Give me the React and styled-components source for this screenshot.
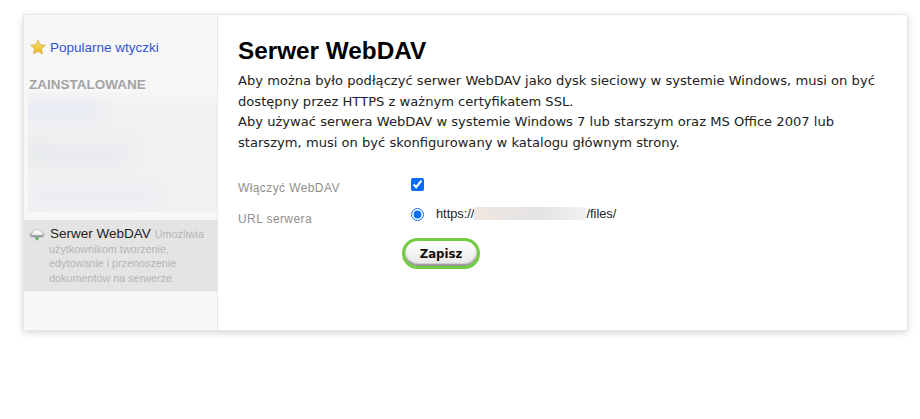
import React from "react";
import styled, { createGlobalStyle } from "styled-components";

const GlobalStyle = createGlobalStyle`
  html, body {
    margin: 0;
    background: #fff;
  }
  body {
    font-family: "Liberation Sans", Arial, sans-serif;
  }
`;

const Page = styled.div`
  box-sizing: border-box;
  min-height: 419px;
  padding: 15px 13px 0 24px;
`;

const Panel = styled.div`
  display: flex;
  height: 315px;
  background: #fff;
  box-shadow: 0 0 0 1px #e6e6e6, 0 2px 8px rgba(0, 0, 0, 0.2);
`;

const Sidebar = styled.aside`
  width: 194px;
  flex-shrink: 0;
  box-sizing: border-box;
  padding-top: 23px;
  background: #f7f7f7;
  border-right: 1px solid #e8e8e8;
  overflow: hidden;
`;

const PopularLink = styled.a`
  display: flex;
  align-items: center;
  gap: 4px;
  height: 18px;
  padding-left: 6px;
  color: #2f55d4;
  font-size: 13.5px;
  text-decoration: none;
`;

const SectionTitle = styled.div`
  margin: 21px 0 0 5px;
  height: 15px;
  line-height: 15px;
  color: #a3a3a3;
  font-size: 13.5px;
  font-weight: bold;
`;

const BlurArea = styled.div`
  position: relative;
  height: 120px;
  margin: 0 0 8px 4px;
  overflow: hidden;
  background: linear-gradient(#f6f6f6, #f1f1f1 14px);
`;

const BlurPatch = styled.div`
  position: absolute;
  left: ${(p) => p.$left}px;
  top: ${(p) => p.$top}px;
  width: ${(p) => p.$width}px;
  height: ${(p) => p.$height}px;
  background: ${(p) => p.$color};
  filter: blur(8px);
`;

const PluginItem = styled.div`
  box-sizing: border-box;
  width: 193px;
  height: 71px;
  padding: 7px 6px 0 25px;
  position: relative;
  background: #e4e4e4;
  color: #b5b5b5;
  font-size: 10.8px;
  line-height: 14.5px;
  text-indent: 1px;
`;

const PluginIcon = styled.svg`
  position: absolute;
  left: 5px;
  top: 8px;
`;

const PluginName = styled.span`
  color: #222;
  font-size: 13.5px;
  margin-right: 4px;
`;

const Main = styled.main`
  flex: 1;
  padding: 21px 20px 0 20px;
  min-width: 0;
`;

const Heading = styled.h1`
  margin: 0 0 5px;
  color: #000;
  font-size: 24.3px;
  line-height: 30px;
  font-weight: bold;
`;

const Intro = styled.p`
  margin: 0;
  width: 650px;
  color: #222;
  font-family: "DejaVu Sans", sans-serif;
  font-size: 13.1px;
  line-height: 20.5px;
`;

const Form = styled.div`
  display: grid;
  grid-template-columns: 173px 1fr;
  grid-auto-rows: 18px;
  row-gap: 12px;
  margin-top: 22px;
`;

const Label = styled.div`
  color: #8f8f8f;
  font-size: 12px;
  letter-spacing: 0.4px;
  line-height: 18px;
  padding-top: ${(p) => p.$pad}px;
`;

const Field = styled.div`
  display: flex;
  align-items: center;
  height: 18px;
  color: #222;
  font-size: 12.8px;
`;

const Check = styled.input`
  width: 13px;
  height: 13px;
  margin: 0;
  accent-color: #0a6cff;
`;

const Radio = styled(Check)`
  margin-right: 12px;
`;

const UrlText = styled.span`
  position: relative;
  top: -1px;
  display: flex;
  align-items: center;
`;

const Masked = styled.span`
  display: inline-block;
  width: 112px;
  height: 13px;
  background: linear-gradient(90deg, #efe6e0, #e4e4e4 60%, #f2f2f2);
`;

const SaveButton = styled.button`
  display: block;
  width: 78px;
  height: 31px;
  margin: 15px 0 0 164px;
  padding: 0;
  border: 3px solid #72cc42;
  border-radius: 16px;
  background: linear-gradient(#fff, #e6e6e6);
  box-shadow: inset 0 -2px 2px #8c8c8c;
  color: #111;
  font-family: "DejaVu Sans", sans-serif;
  font-size: 11.7px;
  font-weight: bold;
`;

const App = () => {
  return (
    <Page>
      <GlobalStyle />
      <Panel>
        <Sidebar>
          <PopularLink href="#">
            <svg width="16" height="16" viewBox="0 0 16 16">
              <defs>
                <linearGradient id="star" x1="0" y1="0" x2="0" y2="1">
                  <stop offset="0" stopColor="#f8e27a" />
                  <stop offset="1" stopColor="#e5b416" />
                </linearGradient>
              </defs>
              <path
                d="M8 .8l2.2 4.8 5.2.6-3.9 3.5 1.1 5.2L8 12.3l-4.6 2.6 1.1-5.2L.6 6.2l5.2-.6z"
                fill="url(#star)"
                stroke="#c9a94a"
                strokeWidth="0.6"
              />
            </svg>
            Popularne wtyczki
          </PopularLink>
          <SectionTitle>ZAINSTALOWANE</SectionTitle>
          <BlurArea>
            <BlurPatch $left={-5} $top={8} $width={75} $height={20} $color="#e8ebf5" />
            <BlurPatch $left={0} $top={52} $width={100} $height={18} $color="#e7e9f0" />
            <BlurPatch $left={-4} $top={62} $width={14} $height={10} $color="#e3eae0" />
            <BlurPatch $left={0} $top={98} $width={125} $height={16} $color="#eaecf6" />
          </BlurArea>
          <PluginItem>
            <PluginIcon width="16" height="14" viewBox="0 0 16 14">
              <ellipse cx="8" cy="6.5" rx="7.5" ry="3" fill="#aeb4b8" />
              <path
                d="M2.5 7a2 2 0 0 1 1.5-2.6A4 4 0 0 1 11.6 3.6 2.2 2.2 0 0 1 13.5 7z"
                fill="#f6f6f6"
                stroke="#a0a5a8"
                strokeWidth="0.5"
              />
              <path d="M1.5 8.3h13v0.9h-13z" fill="#7f858a" />
              <path d="M8 9l2 2H5.9z" fill="#3fa63a" />
              <path d="M7.2 10.8h1.6v1.4H7.2z" fill="#3fa63a" />
            </PluginIcon>
            <PluginName>Serwer WebDAV</PluginName>
            Umożliwia użytkownikom tworzenie, edytowanie i przenoszenie dokumentów na serwerze
          </PluginItem>
        </Sidebar>
        <Main>
          <Heading>Serwer WebDAV</Heading>
          <Intro>
            Aby można było podłączyć serwer WebDAV jako dysk sieciowy w systemie Windows, musi on być
            dostępny przez HTTPS z ważnym certyfikatem SSL.
            <br />
            Aby używać serwera WebDAV w systemie Windows 7 lub starszym oraz MS Office 2007 lub
            starszym, musi on być skonfigurowany w katalogu głównym strony.
          </Intro>
          <Form>
            <Label $pad={4}>Włączyć WebDAV</Label>
            <Field>
              <Check type="checkbox" defaultChecked />
            </Field>
            <Label $pad={5}>URL serwera</Label>
            <Field>
              <Radio type="radio" defaultChecked />
              <UrlText>
                https://
                <Masked />
                /files/
              </UrlText>
            </Field>
          </Form>
          <SaveButton>Zapisz</SaveButton>
        </Main>
      </Panel>
    </Page>
  );
};

export default App;
